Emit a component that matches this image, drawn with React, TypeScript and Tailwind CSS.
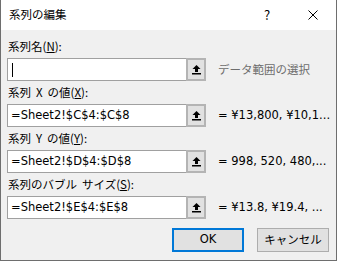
import React from "react";

const jp = { fontFamily: '"Noto Sans CJK JP", "Noto Sans", sans-serif' };
const latin = { fontFamily: '"DejaVu Sans", "Noto Sans CJK JP", sans-serif' };

function UpIcon() {
  return (
    <svg width="9" height="10" viewBox="0 0 9 10" className="block">
      <path d="M4.5 0 L8.5 4 L6 4 L6 7 L3 7 L3 4 L0.5 4 Z" fill="#000" />
      <rect x="0" y="8" width="9" height="1.5" fill="#000" />
    </svg>
  );
}

function RefEdit({ value, cursor }: { value?: string; cursor?: boolean }) {
  return (
    <div className="flex h-[23px] w-[199px]">
      <div className="flex flex-1 items-center border border-r-0 border-[#a0a0a0] bg-white pl-[3px]">
        {cursor ? <div className="ml-[1px] h-[14px] w-[1px] bg-black" /> : null}
        {value ? (
          <span className="text-[11.5px] leading-none text-black" style={latin}>
            {value}
          </span>
        ) : null}
      </div>
      <div className="flex w-[20px] items-center justify-center border-2 border-[#b4b4b4] bg-[#e1e1e1]">
        <UpIcon />
      </div>
    </div>
  );
}

function Label({ children }: { children: React.ReactNode }) {
  return (
    <div className="flex h-[23px] items-center pl-[1px] text-[11.5px] leading-none text-black" style={jp}>
      {children}
    </div>
  );
}

function Sp() {
  return <span className="inline-block w-[5px]" />;
}

function Row({ value, cursor, side, gray }: { value?: string; cursor?: boolean; side: string; gray?: boolean }) {
  return (
    <div className="flex items-center">
      <RefEdit value={value} cursor={cursor} />
      <span
        className={`ml-[12px] whitespace-nowrap text-[11.5px] leading-none ${gray ? "text-[#6d6d6d]" : "text-black"}`}
        style={gray ? jp : latin}
      >
        {side}
      </span>
    </div>
  );
}

export default function App() {
  return (
    <div className="flex h-[261px] w-[337px] flex-col border-x border-b border-[#6e6e6e] bg-[#f0f0f0]">
      <div className="flex h-[30px] items-center bg-white">
        <span className="pl-[8px] text-[11.5px] leading-none text-black" style={jp}>
          系列の編集
        </span>
        <div className="ml-auto flex h-full">
          <div className="flex w-[46px] items-center justify-center text-[13px] text-black" style={jp}>
            ?
          </div>
          <div className="flex w-[46px] items-center justify-center">
            <svg width="10" height="10" viewBox="0 0 10 10">
              <path d="M0.5 0.5 L9.5 9.5 M9.5 0.5 L0.5 9.5" stroke="#000" strokeWidth="1" />
            </svg>
          </div>
        </div>
      </div>
      <div className="flex flex-col pl-[6px] pt-[5px]">
        <Label>
          系列名(<span className="underline">N</span>):
        </Label>
        <Row cursor side="データ範囲の選択" gray />
        <Label>
          系列<Sp />X<Sp />の値(<span className="underline">X</span>):
        </Label>
        <Row value="=Sheet2!$C$4:$C$8" side="= ¥13,800, ¥10,1..." />
        <Label>
          系列<Sp />Y<Sp />の値(<span className="underline">Y</span>):
        </Label>
        <Row value="=Sheet2!$D$4:$D$8" side="= 998, 520, 480,..." />
        <Label>
          系列のバブル<Sp />サイズ(<span className="underline">S</span>):
        </Label>
        <Row value="=Sheet2!$E$4:$E$8" side="= ¥13.8, ¥19.4, ..." />
      </div>
      <div className="mt-[9px] flex justify-end gap-[13px] pr-[7px]">
        <button
          className="flex h-[24px] w-[72px] items-center justify-center border-2 border-[#0078d7] bg-[#e1e1e1] text-[11.5px] leading-none text-black"
          style={latin}
        >
          OK
        </button>
        <button
          className="flex h-[24px] w-[72px] items-center justify-center border border-[#adadad] bg-[#e1e1e1] text-[11.5px] leading-none text-black"
          style={jp}
        >
          キャンセル
        </button>
      </div>
    </div>
  );
}
